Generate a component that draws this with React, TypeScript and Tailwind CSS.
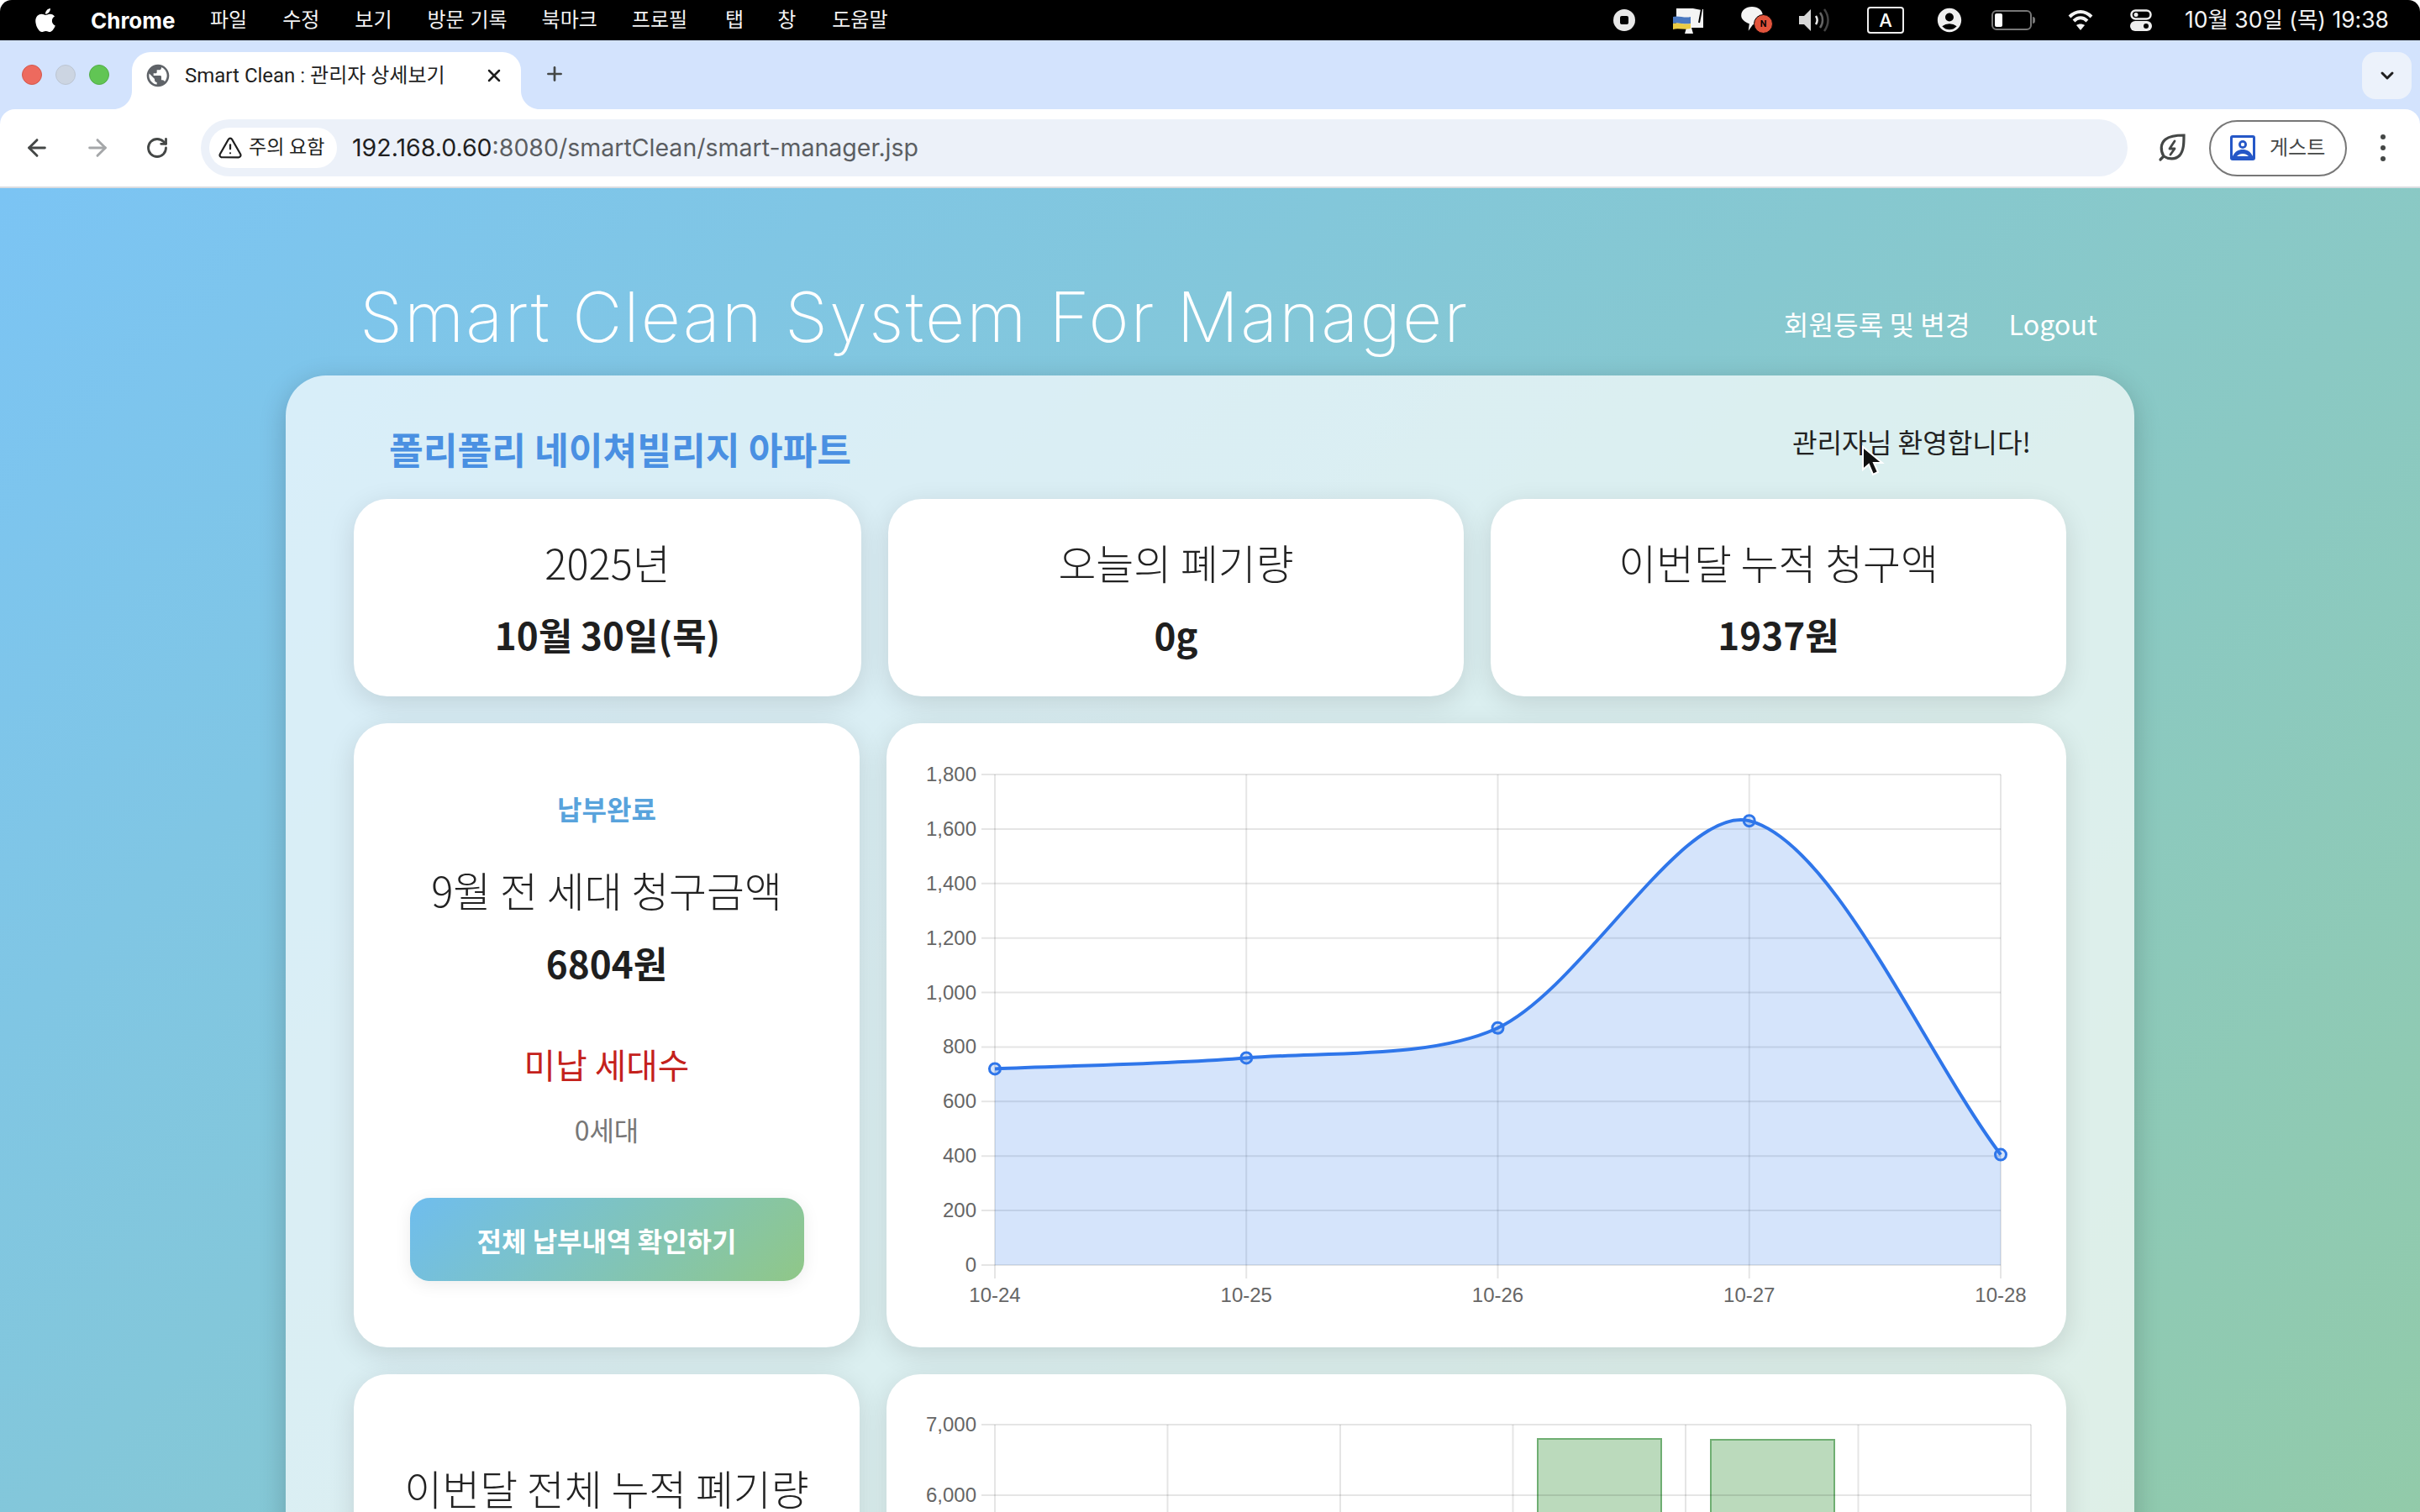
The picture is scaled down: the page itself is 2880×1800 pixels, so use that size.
import { ArrowLeft, ArrowRight, ChevronDown, Plus, RotateCw, TriangleAlert, X } from 'lucide-react'
import { FaApple } from 'react-icons/fa'
import { MdAccountCircle, MdPublic } from 'react-icons/md'

const menus = [
  { label: '파일', cls: 'ml-[41px]' },
  { label: '수정', cls: 'ml-[42px]' },
  { label: '보기', cls: 'ml-[42px]' },
  { label: '방문 기록', cls: 'ml-[42px]' },
  { label: '북마크', cls: 'ml-[41px]' },
  { label: '프로필', cls: 'ml-[41px]' },
  { label: '탭', cls: 'ml-[45px]' },
  { label: '창', cls: 'ml-[40px]' },
  { label: '도움말', cls: 'ml-[43px]' },
]

function StatusIcons() {
  return (
    <div className="flex items-center">
      <div className="w-[26px] h-[26px] rounded-full bg-[#e8e8e8] flex items-center justify-center">
        <div className="w-[10px] h-[10px] bg-black rounded-[2px]" />
      </div>
      <svg width="38" height="34" viewBox="0 0 38 34" className="ml-[45px]">
        <path d="M4 3h27l5 1v22H4z" fill="#f4f4f4" />
        <path d="M24 2l10 2-3 16" fill="none" stroke="#000" strokeWidth="2" />
        <path d="M16 26h6l2 7H14z" fill="#f4f4f4" />
        <path d="M0 13c6-2 14 2 21 0v8c-7 2-15-2-21 0z" fill="#4a78c0" />
        <path d="M0 21c6-2 14 2 21 0v6c-7 2-15-1-21 1z" fill="#eacb45" />
      </svg>
      <div className="relative ml-[43px] w-[32px] h-[32px]">
        <svg width="26" height="32" viewBox="0 0 24 30" className="absolute left-0 top-0">
          <path d="M12 0c7 0 12 4 12 10s-5 10-11 10l-5 7 1-8C4 17 0 14 0 10 0 4 5 0 12 0z" fill="#f4f4f4" />
        </svg>
        <div className="absolute left-[15px] top-[9px] w-[23px] h-[23px] rounded-full bg-[#e2543c] border border-black flex items-center justify-center text-[10px] font-bold text-black">
          N
        </div>
      </div>
      <svg width="38" height="28" viewBox="0 0 38 28" className="ml-[37px]">
        <path d="M0 9h6l8-8v26l-8-8H0z" fill="#d8d8d8" />
        <path d="M20 9c2 3 2 7 0 10" fill="none" stroke="#e8e8e8" strokeWidth="2.5" />
        <path d="M25 5c4 5 4 13 0 18" fill="none" stroke="#666" strokeWidth="2.5" />
        <path d="M30 1c6 8 6 18 0 26" fill="none" stroke="#444" strokeWidth="2.5" />
      </svg>
      <div className="ml-[43px] w-[44px] h-[32px] rounded-[4px] border-2 border-[#eee] flex items-center justify-center text-[22px] font-medium text-white font-['Inter',sans-serif]">
        A
      </div>
      <MdAccountCircle className="ml-[37px] text-[#eee]" size={34} />
      <div className="ml-[33px] flex items-center">
        <div className="w-[48px] h-[24px] rounded-[6px] border-2 border-[#777] p-[2px]">
          <div className="w-[9px] h-full rounded-[2px] bg-white" />
        </div>
        <div className="w-[3px] h-[8px] bg-[#777] ml-[1px] rounded-r-sm" />
      </div>
      <svg width="30" height="26" viewBox="0 0 30 26" className="ml-[39px]">
        <path d="M2 9c8-8 18-8 26 0" fill="none" stroke="#f2f2f2" strokeWidth="4" />
        <path d="M7 14c5-5 11-5 16 0" fill="none" stroke="#f2f2f2" strokeWidth="4" />
        <path d="M15 25l-5-6c3-2 7-2 10 0z" fill="#f2f2f2" />
      </svg>
      <svg width="26" height="26" viewBox="0 0 26 26" className="ml-[44px]">
        <rect x="1.5" y="1.5" width="23" height="10" rx="5" fill="none" stroke="#eee" strokeWidth="2.5" />
        <circle cx="7" cy="6.5" r="2.5" fill="#eee" />
        <rect x="0" y="14" width="26" height="12" rx="6" fill="#eee" />
        <circle cx="19" cy="20" r="3" fill="#000" />
      </svg>
    </div>
  )
}

function MenuBar() {
  return (
    <div className="h-[48px] shrink-0 bg-black rounded-t-[14px] flex items-center justify-between pl-[38px] pr-[37px] text-[24px] text-[#f4f4f4] font-['Inter','Noto_Sans_CJK_KR',sans-serif]">
      <div className="flex items-center">
        <FaApple className="text-white" size={32} />
        <span className="ml-[38px] text-[26px] font-bold text-white w-[101px]">Chrome</span>
        {menus.map((m) => (
          <span key={m.label} className={m.cls}>
            {m.label}
          </span>
        ))}
      </div>
      <div className="flex items-center">
        <StatusIcons />
        <span className="ml-[39px] text-[26.500px] whitespace-nowrap">10월 30일 (목) 19:38</span>
      </div>
    </div>
  )
}

function TabStrip() {
  return (
    <div className="h-[82px] shrink-0 bg-[#d3e3fd] flex pt-[14px] relative">
      <div className="w-[157px] shrink-0 flex gap-[16px] pl-[26px] pt-[15px]">
        <div className="w-[24px] h-[24px] rounded-full bg-[#ed6a5e] border border-[#d2584c]" />
        <div className="w-[24px] h-[24px] rounded-full bg-[#ccd5e2] border border-[#bcc5d2]" />
        <div className="w-[24px] h-[24px] rounded-full bg-[#61c554] border border-[#52ad46]" />
      </div>
      <div className="relative w-[463px] h-[68px] bg-white rounded-t-[22px] flex items-center pl-[15px] pb-[12px]">
        <svg width="22" height="22" viewBox="0 0 22 22" className="absolute -left-[22px] bottom-0">
          <path d="M22 0v22H0c12 0 22-10 22-22z" fill="#fff" />
        </svg>
        <svg width="22" height="22" viewBox="0 0 22 22" className="absolute -right-[22px] bottom-0">
          <path d="M0 0v22h22C10 22 0 12 0 0z" fill="#fff" />
        </svg>
        <MdPublic className="text-[#5f6368]" size={32} />
        <span className="ml-[16px] text-[24px] text-[#1f1f1f] whitespace-nowrap font-['Roboto','Noto_Sans_CJK_KR',sans-serif]">
          Smart Clean : 관리자 상세보기
        </span>
        <X className="absolute left-[419px] top-[16px] text-[#1f1f1f]" size={24} strokeWidth={2.5} />
      </div>
      <Plus className="ml-[27px] mt-[13px] text-[#444746]" size={26} strokeWidth={2.5} />
      <div className="ml-auto mr-[10px] w-[59px] h-[56px] rounded-[16px] bg-[#ecf2fb] flex items-center justify-center">
        <ChevronDown className="text-[#1f1f1f]" size={24} strokeWidth={3} />
      </div>
    </div>
  )
}

function Toolbar() {
  return (
    <div className="h-[94px] shrink-0 bg-[#d3e3fd]">
      <div className="h-[92px] bg-white rounded-t-[18px] flex items-center pl-[28px] font-['Roboto','Noto_Sans_CJK_KR',sans-serif]">
        <ArrowLeft className="text-[#444746]" size={32} strokeWidth={2.2} />
        <ArrowRight className="ml-[40px] text-[#a5a7a9]" size={32} strokeWidth={2.2} />
        <RotateCw className="ml-[41px] text-[#444746]" size={28} strokeWidth={2.4} />
        <div className="ml-[38px] w-[2293px] h-[68px] rounded-full bg-[#ecf1f9] flex items-center pl-[10px]">
          <div className="w-[152px] h-[48px] rounded-full bg-white flex items-center pl-[10px] text-[23px] text-[#1f1f1f] whitespace-nowrap">
            <TriangleAlert size={30} strokeWidth={1.8} />
            <span className="ml-[7px]">주의 요함</span>
          </div>
          <span className="ml-[18px] text-[28.500px] text-[#5b5e62] font-['Inter',sans-serif]">
            <span className="text-[#1f1f1f]">192.168.0.60</span>:8080/smartClean/smart-manager.jsp
          </span>
        </div>
        <svg width="34" height="34" viewBox="0 0 34 34" className="ml-[36px]">
          <path
            d="M3 31l4-4C3 20 3 12 9 7 14 3 22 2 31 2c0 9 0 18-5 24-5 5-13 5-19 1"
            fill="none"
            stroke="#444746"
            strokeWidth="3.2"
            strokeLinecap="round"
          />
          <path d="M20 9l-6 9h6l-5 7" fill="none" stroke="#444746" strokeWidth="2.8" strokeLinejoin="round" strokeLinecap="round" />
        </svg>
        <div className="ml-[27px] w-[164px] h-[67px] rounded-full border-2 border-[#777] flex items-center pl-[23px] text-[24px] text-[#444746]">
          <svg width="30" height="30" viewBox="0 0 30 30">
            <rect width="30" height="30" rx="3" fill="#2557c7" />
            <rect x="3" y="3" width="24" height="24" fill="#fff" />
            <circle cx="15" cy="11" r="5" fill="#2557c7" />
            <circle cx="15" cy="11" r="2.200" fill="#fff" />
            <path d="M3 25c3-6 7-8 12-8s9 2 12 8v2H3z" fill="#2557c7" />
            <path d="M8 25c2-2 4-3 7-3s5 1 7 3z" fill="#fff" />
          </svg>
          <span className="ml-[17px]">게스트</span>
        </div>
        <div className="ml-[40px] flex flex-col gap-[7px]">
          <div className="w-[6px] h-[6px] rounded-full bg-[#444746]" />
          <div className="w-[6px] h-[6px] rounded-full bg-[#444746]" />
          <div className="w-[6px] h-[6px] rounded-full bg-[#444746]" />
        </div>
      </div>
      <div className="h-[2px] bg-[#dadce0]" />
    </div>
  )
}

function SummaryCard({ label, value }: { label: string; value: string }) {
  return (
    <div className="h-[235px] rounded-[40px] bg-white shadow-[0_8px_32px_rgba(0,0,0,0.12)] flex flex-col items-center pt-[39px]">
      <div className="text-[48.800px] leading-[72px] font-light text-[#222]">{label}</div>
      <div className="mt-[17px] text-[44px] leading-[66px] font-bold text-[#1f1f1f]">{value}</div>
    </div>
  )
}

function BillingCard() {
  return (
    <div className="h-[743px] rounded-[40px] bg-white shadow-[0_8px_32px_rgba(0,0,0,0.12)] flex flex-col items-center pt-[77px]">
      <div className="text-[32px] leading-[48px] font-bold text-[#58a3dc]">납부완료</div>
      <div className="mt-[37px] text-[48.800px] leading-[72px] font-light text-[#222]">9월 전 세대 청구금액</div>
      <div className="mt-[18px] text-[44px] leading-[66px] font-bold text-[#1f1f1f]">6804원</div>
      <div className="mt-[58px] text-[40.800px] leading-[60px] font-normal text-[#c4211c]">미납 세대수</div>
      <div className="mt-[23px] text-[32px] leading-[48px] text-[#777]">0세대</div>
      <div className="mt-[58px] w-[469px] h-[99px] rounded-[24px] bg-linear-135 from-[#6fbdee] to-[#90c787] shadow-[0_4px_20px_rgba(0,0,0,0.08)] flex items-center justify-center text-[32px] font-bold text-white">
        전체 납부내역 확인하기
      </div>
    </div>
  )
}

const xLabels = ['10-24', '10-25', '10-26', '10-27', '10-28']
const yTicks = [0, 200, 400, 600, 800, 1000, 1200, 1400, 1600, 1800]
const usage = [720, 760, 870, 1630, 405]
const tension = 0.3

const lineX = (i: number) => 1184 + i * 299.25
const lineY = (v: number) => 1506 - (v / 1800) * 584

// same bezier chart.js draws for a tensioned line
function splinePath(pts: { x: number; y: number }[]) {
  const ctrl = pts.map((p, i) => {
    const prev = pts[Math.max(i - 1, 0)]
    const next = pts[Math.min(i + 1, pts.length - 1)]
    const d01 = Math.hypot(p.x - prev.x, p.y - prev.y)
    const d12 = Math.hypot(next.x - p.x, next.y - p.y)
    const s01 = d01 / (d01 + d12)
    const s12 = d12 / (d01 + d12)
    return {
      px: p.x - tension * s01 * (next.x - prev.x),
      py: p.y - tension * s01 * (next.y - prev.y),
      nx: p.x + tension * s12 * (next.x - prev.x),
      ny: p.y + tension * s12 * (next.y - prev.y),
    }
  })
  let d = `M${pts[0].x} ${pts[0].y}`
  for (let i = 1; i < pts.length; i++) {
    d += `C${ctrl[i - 1].nx} ${ctrl[i - 1].ny} ${ctrl[i].px} ${ctrl[i].py} ${pts[i].x} ${pts[i].y}`
  }
  return d
}

function LineChart() {
  const pts = usage.map((v, i) => ({ x: lineX(i), y: lineY(v) }))
  const curve = splinePath(pts)
  return (
    <svg viewBox="1055 861 1404 743" className="block w-full h-full" fontFamily="'Liberation Sans', sans-serif" fontSize="24" fill="#666">
      {yTicks.map((t) => (
        <g key={t}>
          <line x1="1168" x2="2381" y1={lineY(t)} y2={lineY(t)} stroke="rgba(0,0,0,0.1)" strokeWidth="2" />
          <text x="1162" y={lineY(t) + 8} textAnchor="end">
            {t.toLocaleString('en-US')}
          </text>
        </g>
      ))}
      {xLabels.map((l, i) => (
        <g key={l}>
          <line x1={lineX(i)} x2={lineX(i)} y1="922" y2="1522" stroke="rgba(0,0,0,0.1)" strokeWidth="2" />
          <text x={lineX(i)} y="1550" textAnchor="middle">
            {l}
          </text>
        </g>
      ))}
      <path d={`${curve}L2381 1506L1184 1506Z`} fill="rgba(47,118,234,0.2)" />
      <path d={curve} fill="none" stroke="#2f76ea" strokeWidth="4" />
      {pts.map((p) => (
        <circle key={p.x} cx={p.x} cy={p.y} r="6.5" fill="rgba(47,118,234,0.2)" stroke="#2f76ea" strokeWidth="3" />
      ))}
    </svg>
  )
}

function BarChart() {
  const cols = [1184, 1389.5, 1595, 1800.5, 2006, 2211.5, 2417]
  return (
    <svg viewBox="1055 1636 1404 700" className="block w-full h-full" fontFamily="'Liberation Sans', sans-serif" fontSize="24" fill="#666">
      {cols.map((x) => (
        <line key={x} x1={x} x2={x} y1="1696" y2="2300" stroke="rgba(0,0,0,0.1)" strokeWidth="2" />
      ))}
      {[1830, 2036].map((x, i) => (
        <rect
          key={x}
          x={x}
          y={i === 0 ? 1713 : 1714}
          width="147"
          height="600"
          fill="rgba(76,157,80,0.38)"
          stroke="#6fae72"
          strokeWidth="2"
        />
      ))}
      {[
        { y: 1696, label: '7,000' },
        { y: 1780, label: '6,000' },
      ].map((t) => (
        <g key={t.label}>
          <line x1="1168" x2="2417" y1={t.y} y2={t.y} stroke="rgba(0,0,0,0.1)" strokeWidth="2" />
          <text x="1162" y={t.y + 8} textAnchor="end">
            {t.label}
          </text>
        </g>
      ))}
    </svg>
  )
}

function Dashboard() {
  return (
    <div className="bg-linear-135 from-[#7bc4f4] to-[#96cb9c] px-[340px] pb-[120px] font-['Noto_Sans_CJK_KR','Noto_Sans',sans-serif]">
      <div className="h-[223px] flex items-start justify-between pl-[88px] pr-[44px]">
        <h1 className="mt-[109px] text-[82px] leading-[90px] font-extralight text-white whitespace-nowrap font-['Inter',sans-serif] tracking-[2px]">
          Smart Clean System For Manager
        </h1>
        <div className="mt-[137px] flex gap-[46px] text-[32.200px] leading-[48px] text-white">
          <span>회원등록 및 변경</span>
          <span>Logout</span>
        </div>
      </div>
      <div className="rounded-[48px] bg-white/70 shadow-[0_8px_32px_rgba(0,0,0,0.2)] px-[81px] pb-[64px]">
        <div className="h-[147px] flex justify-between pl-[42px] pr-[42px]">
          <h2 className="mt-[54px] text-[44.300px] leading-[66px] font-bold text-[#4a90e2]">폴리폴리 네이쳐빌리지 아파트</h2>
          <div className="mt-[54px] text-[32.200px] leading-[48px] text-[#222]">관리자님 환영합니다!</div>
        </div>
        <div className="grid grid-cols-[604px_685px_685px] gap-[32px]">
          <SummaryCard label="2025년" value="10월 30일(목)" />
          <SummaryCard label="오늘의 폐기량" value="0g" />
          <SummaryCard label="이번달 누적 청구액" value="1937원" />
        </div>
        <div className="mt-[32px] grid grid-cols-[602px_1404px] gap-[32px]">
          <BillingCard />
          <div className="h-[743px] rounded-[40px] bg-white shadow-[0_8px_32px_rgba(0,0,0,0.12)] overflow-hidden">
            <LineChart />
          </div>
        </div>
        <div className="mt-[32px] grid grid-cols-[602px_1404px] gap-[32px]">
          <div className="h-[700px] rounded-[40px] bg-white shadow-[0_8px_32px_rgba(0,0,0,0.12)] flex flex-col items-center pt-[107px]">
            <div className="text-[48.800px] leading-[56px] font-light text-[#222]">이번달 전체 누적 폐기량</div>
          </div>
          <div className="h-[700px] rounded-[40px] bg-white shadow-[0_8px_32px_rgba(0,0,0,0.12)] overflow-hidden">
            <BarChart />
          </div>
        </div>
      </div>
    </div>
  )
}

export default function App() {
  return (
    <div className="relative h-screen overflow-hidden bg-white flex flex-col">
      <MenuBar />
      <TabStrip />
      <Toolbar />
      <div className="flex-1 min-h-0 overflow-hidden">
        <Dashboard />
      </div>
      {/* mouse pointer caught in the capture */}
      <svg width="34" height="38" viewBox="0 0 34 38" className="absolute left-[2214px] top-[530px]">
        <path d="M3 2v27l7-6 5 12 6-3-5-11h10z" fill="#111" stroke="#fff" strokeWidth="2" />
      </svg>
    </div>
  )
}
